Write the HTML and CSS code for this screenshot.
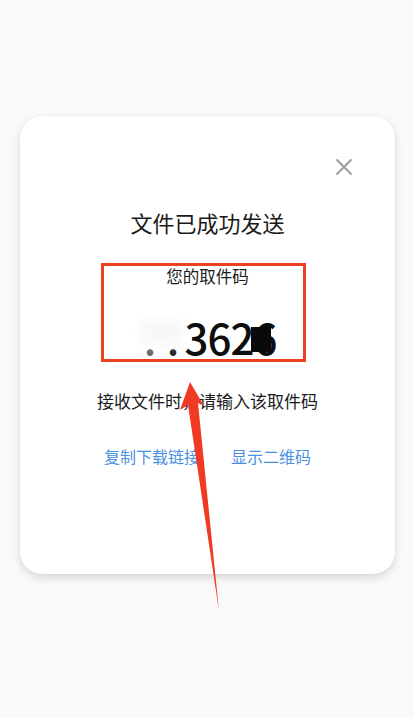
FILE: index.html
```html
<!DOCTYPE html>
<html lang="zh-CN">
<head>
<meta charset="utf-8">
<title>文件已成功发送</title>
<link rel="stylesheet" href="styles.css">
</head>
<body>
<div class="page">
  <div class="card">
    <div class="close-row">
      <svg class="close" viewBox="0 0 16 16" width="16" height="16">
        <path d="M1 1 L15 15 M15 1 L1 15" stroke="#9a9a9a" stroke-width="1.8" fill="none" stroke-linecap="round"/>
      </svg>
    </div>
    <div class="title">文件已成功发送</div>
    <div class="label">您的取件码</div>
    <div class="code">
      <span class="cell blur-cell"><span class="dot">.</span></span><span class="cell blur-cell"><span class="dot">.</span></span><span class="cell">3</span><span class="cell">6</span><span class="cell">2</span><span class="cell last">6<span class="redact"></span></span>
      <span class="smudge"></span>
    </div>
    <div class="hint">接收文件时，请输入该取件码</div>
    <div class="links">
      <span class="link">复制下载链接</span>
      <span class="link">显示二维码</span>
    </div>
    <div class="mark-box"></div>
  </div>
  <svg class="arrow" viewBox="0 0 413 718" width="413" height="718">
    <polygon points="190,382 180,410 188,405 219,611 198,403 204,406" fill="#f03a24"/>
  </svg>
</div>
</body>
</html>
```

FILE: styles.css
```css
html, body {
  margin: 0;
  padding: 0;
  background: #f9f9f9;
}

body {
  font-family: "Noto Sans CJK SC", "Noto Sans", sans-serif;
  color: #222;
}

.page {
  position: relative;
  width: 413px;
  height: 718px;
  padding-top: 116px;
  box-sizing: border-box;
}

.card {
  position: relative;
  margin-left: 20px;
  width: 375px;
  height: 458px;
  background: #fff;
  border-radius: 22px;
  box-shadow: 0 4px 8px rgba(0, 0, 0, 0.13), 0 0 2px rgba(0, 0, 0, 0.05);
  display: flex;
  flex-direction: column;
  align-items: center;
}

.close-row {
  align-self: stretch;
  display: flex;
  justify-content: flex-end;
  padding: 43px 43px 0 0;
  height: 16px;
}

.close {
  display: block;
}

.title {
  margin-top: 32px;
  font-size: 22px;
  line-height: 30px;
  color: #1a1a1a;
}

.label {
  margin-top: 28px;
  font-size: 16.5px;
  line-height: 22px;
  color: #1a1a1a;
}

.code {
  position: relative;
  margin-top: 27px;
  display: flex;
  font-size: 42px;
  font-weight: 500;
  line-height: 46px;
  height: 46px;
  color: #0e0e0e;
}

.cell {
  position: relative;
  width: 23px;
  text-align: center;
}

.blur-cell .dot {
  color: #222;
}

.blur-cell:first-child .dot {
  color: #666;
}

.redact {
  position: absolute;
  left: -3px;
  top: 13px;
  width: 20px;
  height: 25px;
  background: #0a0a0a;
}

.smudge {
  position: absolute;
  left: 2px;
  top: 6px;
  width: 42px;
  height: 26px;
  background: #f3f3f3;
  filter: blur(5px);
  opacity: 0.6;
}

.hint {
  margin-top: 29px;
  font-size: 17px;
  line-height: 24px;
  color: #1a1a1a;
}

.links {
  margin-top: 32px;
  display: flex;
  gap: 31px;
  font-size: 16px;
  line-height: 22px;
}

.link {
  color: #4a90e2;
}

.mark-box {
  position: absolute;
  left: 81px;
  top: 147px;
  width: 205px;
  height: 99px;
  box-sizing: border-box;
  border: 3px solid #ec3f20;
}

.arrow {
  position: absolute;
  left: 0;
  top: 0;
  pointer-events: none;
}
```
